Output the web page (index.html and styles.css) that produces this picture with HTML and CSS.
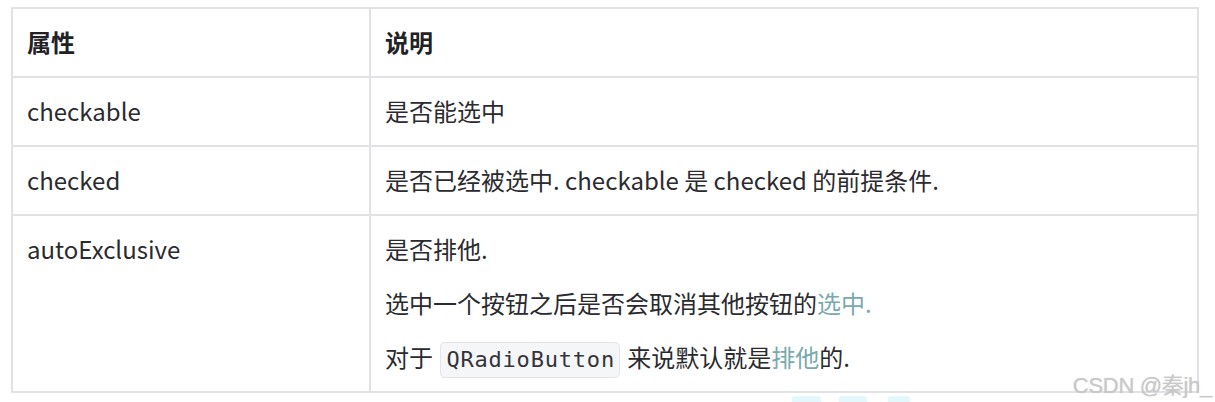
FILE: index.html
```html
<!DOCTYPE html>
<html lang="zh-CN">
<head>
<meta charset="utf-8">
<title>属性说明</title>
<link rel="stylesheet" href="styles.css">
</head>
<body>
<div class="page">
  <table class="props">
    <thead>
      <tr>
        <th class="col-name">属性</th>
        <th>说明</th>
      </tr>
    </thead>
    <tbody>
      <tr>
        <td>checkable</td>
        <td>是否能选中</td>
      </tr>
      <tr>
        <td>checked</td>
        <td>是否已经被选中. checkable 是 checked 的前提条件.</td>
      </tr>
      <tr>
        <td class="top">autoExclusive</td>
        <td>
          <div class="paras">
            <p>是否排他.</p>
            <p>选中一个按钮之后是否会取消其他按钮的<span class="tint">选中.</span></p>
            <p>对于 <code>QRadioButton</code> 来说默认就是<span class="tint">排他</span>的.</p>
          </div>
        </td>
      </tr>
    </tbody>
  </table>
  <div class="watermark">CSDN @秦jh_</div>
  <div class="blobs">
    <span class="blob b1"></span>
    <span class="blob b2"></span>
    <span class="blob b3"></span>
  </div>
</div>
</body>
</html>
```

FILE: styles.css
```css
html, body {
  margin: 0;
  padding: 0;
  background: #ffffff;
}

.page {
  position: relative;
  width: 1215px;
  height: 402px;
  overflow: hidden;
  padding: 7px 0 0 11px;
  box-sizing: border-box;
  font-family: "Noto Sans CJK SC", "Noto Sans", sans-serif;
  color: #2b2b2f;
}

.props {
  border-collapse: collapse;
  width: 1188px;
  table-layout: fixed;
  font-size: 24px;
}

.props th,
.props td {
  border: 2px solid #e1e1e6;
  padding: 14px 14px 16px;
  line-height: 37px;
  text-align: left;
  vertical-align: middle;
}

.props th {
  font-weight: 700;
  color: #222226;
}

.col-name {
  width: 328px;
}

.props td.top {
  vertical-align: top;
}

.paras {
  display: flex;
  flex-direction: column;
  gap: 17px;
}

.paras p {
  margin: 0;
  height: 37px;
}

code {
  font-family: "DejaVu Sans Mono", "Liberation Mono", monospace;
  font-size: 22px;
  line-height: 20px;
  letter-spacing: 0.8px;
  background: #f5f6f8;
  border: 1px solid #e4e4e8;
  border-radius: 5px;
  padding: 4px 4px 5px 5px;
  color: #34343a;
  margin: 0 2px;
}

.tint {
  color: #7aa9ad;
}

.watermark {
  position: absolute;
  right: 3px;
  top: 367px;
  font-family: "Liberation Sans", "Noto Sans CJK SC", sans-serif;
  font-size: 22px;
  color: #c9c9c9;
  text-shadow: 0 0 1px rgba(120, 120, 120, 0.35);
  letter-spacing: -0.3px;
}

.blobs {
  position: absolute;
  left: 0;
  top: 396px;
  width: 100%;
  height: 6px;
}

.blob {
  position: absolute;
  top: 0;
  height: 6px;
  background: #e2f8fa;
  border-radius: 3px 3px 0 0;
}

.b1 { left: 792px; width: 29px; }
.b2 { left: 839px; width: 28px; }
.b3 { left: 888px; width: 22px; }
```
